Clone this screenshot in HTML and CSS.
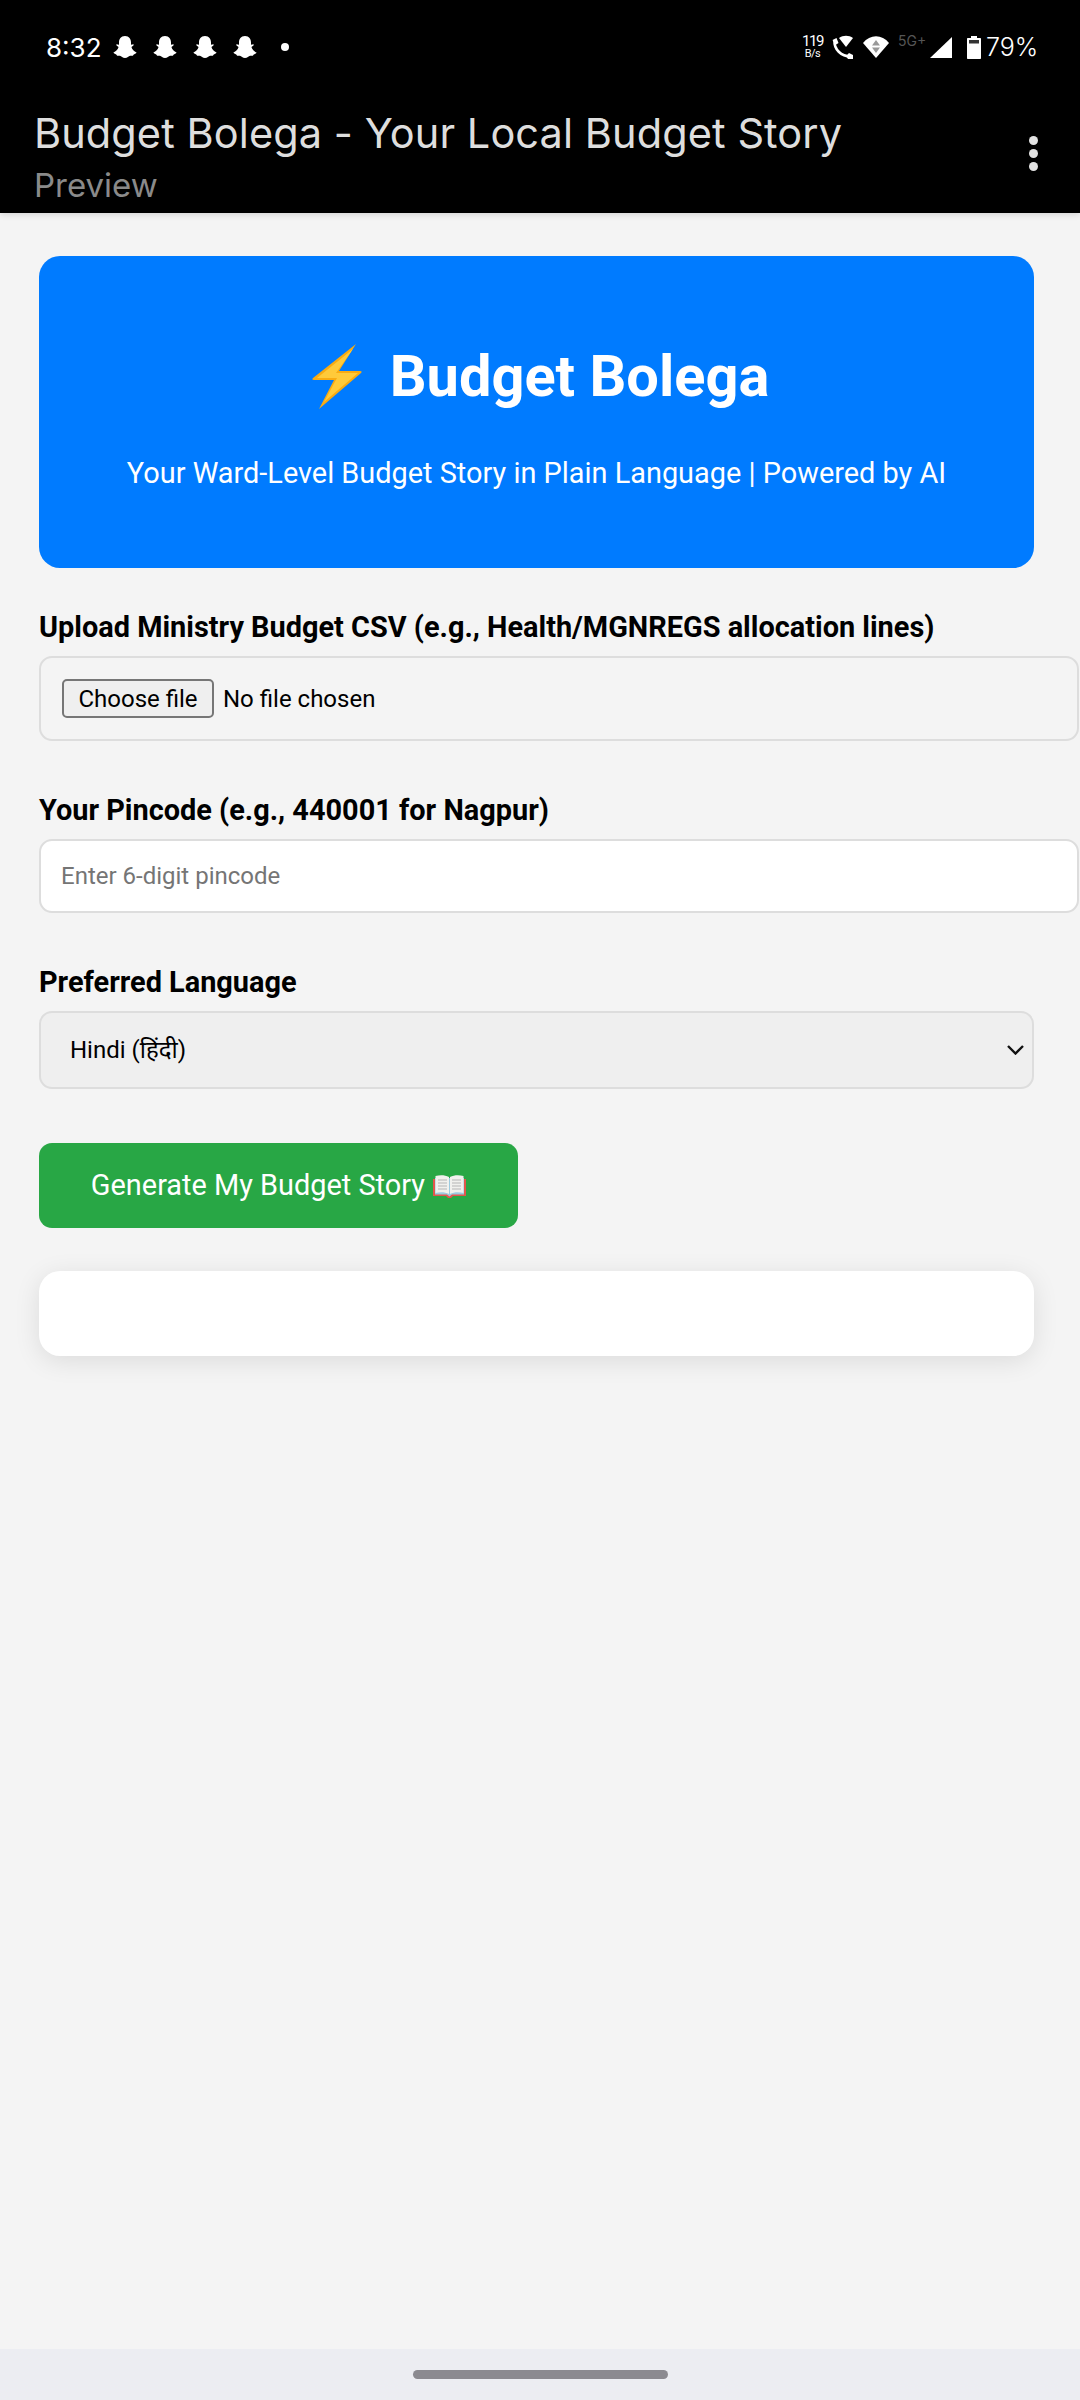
FILE: index.html
```html
<!DOCTYPE html>
<html lang="en">
<head>
  <meta charset="UTF-8">
  <meta name="viewport" content="width=device-width, initial-scale=1.0">
  <title>Budget Bolega</title>
  <link rel="stylesheet" href="styles.css">
</head>
<body>
  <div class="phone">
    <header class="top-bar">
      <div class="status-bar">
        <div class="status-left">
          <span class="clock">8:32</span>
          <svg class="ghost" viewBox="0 0 26 26"><use href="#ghost"/></svg>
          <svg class="ghost" viewBox="0 0 26 26"><use href="#ghost"/></svg>
          <svg class="ghost" viewBox="0 0 26 26"><use href="#ghost"/></svg>
          <svg class="ghost" viewBox="0 0 26 26"><use href="#ghost"/></svg>
          <span class="dot"></span>
        </div>
        <div class="status-right">
          <span class="speed"><b>119</b><b>B/s</b></span>
          <svg class="call" viewBox="0 0 21 24">
            <path d="M2.500 6 C2 14 9 21.500 18.500 21.500" fill="none" stroke="#fff" stroke-width="2.600"/>
            <path d="M0.500 5 L4.500 3 L6.500 8 L3.500 10 Z M14 21 L17 18 L21 20 L21 24 L16 24 Z" fill="#fff"/>
            <path d="M7 3 C11 0 17 0 21 3 L14 12 Z" fill="#fff"/>
          </svg>
          <svg class="wifi" viewBox="0 0 26 22">
            <path d="M0 7 C7 -2 19 -2 26 7 L13 22 Z" fill="#fff"/>
            <path d="M13 4 L17 9.500 L9 9.500 Z M13 17 L17 11.500 L9 11.500 Z" fill="#999"/>
          </svg>
          <span class="net">5G+</span>
          <svg class="signal" viewBox="0 0 22 21"><path d="M22 0 L22 21 L0 21 Z" fill="#fff"/></svg>
          <svg class="battery" viewBox="0 0 14 23">
            <path d="M4 0 L10 0 L10 2 L13 2 C13.600 2 14 2.400 14 3 L14 22 C14 22.600 13.600 23 13 23 L1 23 C0.400 23 0 22.600 0 22 L0 3 C0 2.400 0.400 2 1 2 L4 2 Z" fill="#fff"/>
            <rect x="2" y="4" width="10" height="3.500" fill="#333"/>
          </svg>
          <span class="percent">79%</span>
        </div>
      </div>
      <div class="app-bar">
        <div class="app-titles">
          <div class="app-title">Budget Bolega - Your Local Budget Story</div>
          <div class="app-sub">Preview</div>
        </div>
        <div class="more">
          <span></span>
          <span></span>
          <span></span>
        </div>
      </div>
    </header>

    <main class="content">
      <section class="hero">
        <h1>
          <svg class="bolt" viewBox="0 0 50 65">
            <path d="M44 0 L1 34 C0 35 0 36 2 36 L22 36 L7 65 L49 29 C50 28 50 27 48 27 L27 27 Z" fill="#f9ab12"/>
            <path d="M41 5 L5 34 L25 34 L12 58 L46 29 L24 29 Z" fill="#ffca3a"/>
          </svg>
          Budget Bolega
        </h1>
        <p>Your Ward-Level Budget Story in Plain Language | Powered by AI</p>
      </section>

      <form class="budget-form" action="javascript:void(0);">
        <div class="form-group">
          <label for="csv">Upload Ministry Budget CSV (e.g., Health/MGNREGS allocation lines)</label>
          <div class="field file-field">
            <button type="button" id="csv" class="file-btn">Choose file</button>
            <span class="file-name">No file chosen</span>
          </div>
        </div>
        <div class="form-group">
          <label for="pincode">Your Pincode (e.g., 440001 for Nagpur)</label>
          <input type="text" id="pincode" class="field text-field" placeholder="Enter 6-digit pincode">
        </div>
        <div class="form-group form-group-last">
          <label for="lang">Preferred Language</label>
          <div class="select-wrap">
            <select id="lang" class="lang-select">
              <option>Hindi (हिंदी)</option>
            </select>
            <svg class="chevron" viewBox="0 0 17 10"><path d="M1 1 L8.500 8.500 L16 1" fill="none" stroke="#111" stroke-width="2.400"/></svg>
          </div>
        </div>
        <button class="generate-btn" type="submit">
          Generate My Budget Story
          <svg class="book" viewBox="0 0 33 23">
            <path d="M0 4 L0 21 L13 21 L15 23 L18 23 L20 21 L33 21 L33 4 Z" fill="#e2574c"/>
            <path d="M2 3 L2 19.500 L14 19.500 L16.500 21.500 L19 19.500 L31 19.500 L31 3 Z" fill="#9ccbe0"/>
            <path d="M2.500 1 C7 0 12 0 16 2 L16 19 C12 17 7 17 2.500 18 Z M30.500 1 C26 0 21 0 17 2 L17 19 C21 17 26 17 30.500 18 Z" fill="#f1f1ee"/>
            <path d="M5 5 H14 M5 8 H14 M5 11 H14 M5 14 H14 M19 5 H28 M19 8 H28 M19 11 H28 M19 14 H28" stroke="#b5b5b5" stroke-width="1"/>
          </svg>
        </button>
      </form>

      <section class="result-card"></section>
    </main>

    <footer class="nav-bar">
      <span class="home-pill"></span>
    </footer>
  </div>

  <svg class="defs" width="0" height="0">
    <defs>
      <path id="ghost" d="M13 1 C8.500 1 6.500 4.500 6.500 8 L6.500 10.500 L4 10 C3 10.500 3.500 11.500 6 13 C5.500 15.500 3 18 0.500 19 C0.500 20 2 20.500 3.500 21 L4.500 22.500 L7.500 22.500 C9 23 10.500 25 13 25 C15.500 25 17 23 18.500 22.500 L21.500 22.500 L22.500 21 C24 20.500 25.500 20 25.500 19 C23 18 20.500 15.500 20 13 C22.500 11.500 23 10.500 22 10 L19.500 10.500 L19.500 8 C19.500 4.500 17.500 1 13 1 Z" fill="#fff"/>
    </defs>
  </svg>
</body>
</html>
```

FILE: styles.css
```css
* {
  box-sizing: border-box;
}
html, body {
  margin: 0;
  padding: 0;
}
body {
  font-family: 'Roboto', 'Noto Sans', sans-serif;
  background-color: #F4F4F4;
  color: #000;
}
.phone {
  width: 1080px;
  height: 2400px;
  display: flex;
  flex-direction: column;
  overflow: hidden;
}
.defs {
  display: none;
}

/* top black area */
.top-bar {
  background: #000;
  height: 213px;
  flex: none;
  box-shadow: 0 2px 6px rgba(0,0,0,0.12);
  position: relative;
}
.status-bar {
  height: 94px;
  padding: 0 46px 0 46px;
  display: flex;
  justify-content: space-between;
  align-items: center;
  color: #fff;
  font-family: 'Inter', sans-serif;
  font-weight: 300;
}
.status-left, .status-right {
  display: flex;
  align-items: center;
}
.clock {
  width: 57px;
  margin-right: 10px;
  font-size: 26px;
  font-weight: 400;
  white-space: nowrap;
}
.ghost {
  width: 24px;
  height: 24px;
  margin-right: 16px;
}
.dot {
  width: 8px;
  height: 8px;
  margin-left: 8px;
  border-radius: 50%;
  background: #fff;
}
.speed {
  display: flex;
  flex-direction: column;
  align-items: center;
  width: 17px;
  margin-right: 11px;
  font-family: 'Roboto', sans-serif;
  font-size: 11px;
  line-height: 11px;
}
.speed b {
  letter-spacing: -0.5px;
}
.speed b:first-child {
  font-size: 15px;
  line-height: 13px;
  letter-spacing: -1.5px;
}
.call {
  width: 21px;
  height: 24px;
  margin-right: 10px;
}
.wifi {
  width: 26px;
  height: 22px;
  margin-right: 9px;
}
.net {
  width: 28px;
  margin-right: 4px;
  margin-bottom: 12px;
  font-size: 14px;
  line-height: 12px;
  font-weight: 400;
  color: #555;
}
.signal {
  width: 22px;
  height: 21px;
  margin-right: 15px;
}
.battery {
  width: 14px;
  height: 23px;
  margin-right: 5px;
}
.percent {
  width: 48px;
  font-size: 25px;
  white-space: nowrap;
}
.app-bar {
  display: flex;
  justify-content: space-between;
  align-items: flex-start;
  padding: 13px 42px 0 34px;
}
.app-title {
  font-family: 'Inter', sans-serif;
  font-weight: 400;
  font-size: 41.500px;
  letter-spacing: 0.08px;
  line-height: 52px;
  color: #DEDEDE;
}
.app-sub {
  margin-top: 6px;
  font-family: 'Inter', sans-serif;
  font-weight: 400;
  font-size: 33px;
  line-height: 40px;
  color: #8A8A8A;
}
.more {
  display: flex;
  flex-direction: column;
  gap: 4px;
  margin-top: 29px;
}
.more span {
  width: 9px;
  height: 9px;
  border-radius: 50%;
  background: #E2E2E2;
}

/* page */
.content {
  flex: 1;
  padding: 43px 46px 0 39px;
}
.hero {
  height: 312px;
  background: #007BFF;
  color: #fff;
  border-radius: 21px;
  display: flex;
  flex-direction: column;
  align-items: center;
  padding-top: 86px;
}
.hero h1 {
  margin: 0;
  font-size: 57.750px;
  line-height: 68px;
  font-weight: 700;
  display: flex;
  align-items: center;
  gap: 28px;
}
.bolt {
  width: 50px;
  height: 65px;
  margin-left: 8px;
}
.hero p {
  margin: 46px 0 0;
  font-size: 28.900px;
  line-height: 34px;
}
.budget-form {
  padding-top: 42px;
}
.form-group {
  margin-bottom: 52px;
}
.form-group-last {
  margin-bottom: 54px;
}
.form-group label {
  display: block;
  font-size: 28.900px;
  line-height: 34px;
  font-weight: 700;
  margin-bottom: 12px;
}
.field {
  display: block;
  box-sizing: content-box;
  width: 996px;
  padding: 20px;
  border: 2px solid #DDD;
  border-radius: 13px;
  font-family: 'Roboto', sans-serif;
  font-size: 24px;
  margin: 0;
}
.file-field {
  background: #F4F4F4;
  height: 41px;
  width: 995px;
  padding-left: 21px;
  display: flex;
  align-items: center;
  gap: 9px;
}
.file-btn {
  height: 39px;
  width: 152px;
  padding: 0;
  background: #EFEFEF;
  border: 2px solid #767676;
  border-radius: 5px;
  color: #000;
  font-family: 'Roboto', sans-serif;
  font-size: 24px;
}
.text-field {
  background: #fff;
  height: 30px;
}
.text-field::placeholder {
  color: #757575;
}
.select-wrap {
  position: relative;
}
.lang-select {
  display: block;
  width: 100%;
  height: 78px;
  padding: 0 29px;
  appearance: none;
  background: #EFEFEF;
  border: 2px solid #DDD;
  border-radius: 13px;
  color: #000;
  font-family: 'Roboto', 'Noto Sans', sans-serif;
  font-size: 24px;
}
.chevron {
  position: absolute;
  right: 10px;
  top: 34px;
  width: 17px;
  height: 10px;
}
.generate-btn {
  width: 479px;
  height: 85px;
  display: block;
  background: #28A745;
  color: #fff;
  border: 0;
  border-radius: 13px;
  font-family: 'Roboto', sans-serif;
  font-size: 28.900px;
  padding: 0 0 2px;
}
.book {
  width: 33px;
  height: 23px;
  vertical-align: -3px;
  margin-left: 1px;
}
.result-card {
  height: 85px;
  margin-top: 43px;
  background: #fff;
  border-radius: 21px;
  box-shadow: 0 5px 26px rgba(0,0,0,0.10);
}
.nav-bar {
  flex: none;
  height: 51px;
  margin-top: auto;
  background: #ECEDF2;
  display: flex;
  justify-content: center;
  padding-top: 21px;
}
.home-pill {
  width: 255px;
  height: 9px;
  border-radius: 5px;
  background: #8B8A90;
}
```
